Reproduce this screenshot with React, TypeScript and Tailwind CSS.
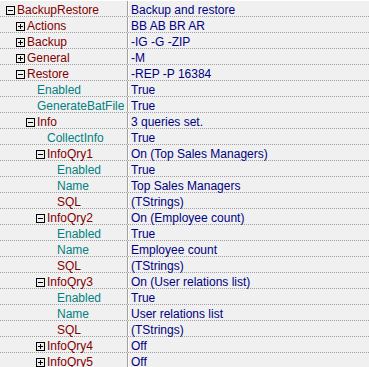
type Row = {
  level: number;
  name: string;
  value: string;
  obj?: boolean;
  box?: 'plus' | 'minus';
};

const rows: Row[] = [
  { level: 0, name: 'BackupRestore', value: 'Backup and restore', obj: true, box: 'minus' },
  { level: 1, name: 'Actions', value: 'BB AB BR AR', obj: true, box: 'plus' },
  { level: 1, name: 'Backup', value: '-IG -G -ZIP', obj: true, box: 'plus' },
  { level: 1, name: 'General', value: '-M', obj: true, box: 'plus' },
  { level: 1, name: 'Restore', value: '-REP -P 16384', obj: true, box: 'minus' },
  { level: 2, name: 'Enabled', value: 'True' },
  { level: 2, name: 'GenerateBatFile', value: 'True' },
  { level: 2, name: 'Info', value: '3 queries set.', obj: true, box: 'minus' },
  { level: 3, name: 'CollectInfo', value: 'True' },
  { level: 3, name: 'InfoQry1', value: 'On (Top Sales Managers)', obj: true, box: 'minus' },
  { level: 4, name: 'Enabled', value: 'True' },
  { level: 4, name: 'Name', value: 'Top Sales Managers' },
  { level: 4, name: 'SQL', value: '(TStrings)', obj: true },
  { level: 3, name: 'InfoQry2', value: 'On (Employee count)', obj: true, box: 'minus' },
  { level: 4, name: 'Enabled', value: 'True' },
  { level: 4, name: 'Name', value: 'Employee count' },
  { level: 4, name: 'SQL', value: '(TStrings)', obj: true },
  { level: 3, name: 'InfoQry3', value: 'On (User relations list)', obj: true, box: 'minus' },
  { level: 4, name: 'Enabled', value: 'True' },
  { level: 4, name: 'Name', value: 'User relations list' },
  { level: 4, name: 'SQL', value: '(TStrings)', obj: true },
  { level: 3, name: 'InfoQry4', value: 'Off', obj: true, box: 'plus' },
  { level: 3, name: 'InfoQry5', value: 'Off', obj: true, box: 'plus' },
];

function ExpandBox({ kind }: { kind: 'plus' | 'minus' }) {
  return (
    <svg width="9" height="9" viewBox="0 0 9 9" className="mt-[5px] shrink-0" shapeRendering="crispEdges">
      <rect x="0.5" y="0.5" width="8" height="8" fill="#f0f0f0" stroke="#000" />
      <line x1="2" y1="4.5" x2="7" y2="4.5" stroke="#000" />
      {kind === 'plus' && <line x1="4.5" y1="2" x2="4.5" y2="7" stroke="#000" />}
    </svg>
  );
}

function PropRow({ row }: { row: Row }) {
  return (
    <div className="flex h-4 border-b border-dotted border-[#a0a0a0]">
      <div
        className="flex w-[127px] shrink-0 items-start whitespace-nowrap"
        style={{ paddingLeft: 6 + row.level * 10 }}
      >
        {row.box ? <ExpandBox kind={row.box} /> : <span className="w-[9px] shrink-0" />}
        <span className={`ml-[2px] pt-px ${row.obj ? 'text-[#800000]' : 'text-[#008080]'}`}>{row.name}</span>
      </div>
      <div className="w-px shrink-0 bg-[#a0a0a0]" />
      <div className="w-px shrink-0 bg-white" />
      <div className="whitespace-nowrap pl-[2px] pt-px text-[#000080]">{row.value}</div>
    </div>
  );
}

export default function App() {
  return (
    <div className="h-[367px] w-[369px] overflow-hidden border-t border-white bg-[#f0f0f0] font-['Liberation_Sans',Arial,sans-serif] text-[12px] leading-4">
      {rows.map((row, i) => (
        <PropRow key={i} row={row} />
      ))}
    </div>
  );
}
